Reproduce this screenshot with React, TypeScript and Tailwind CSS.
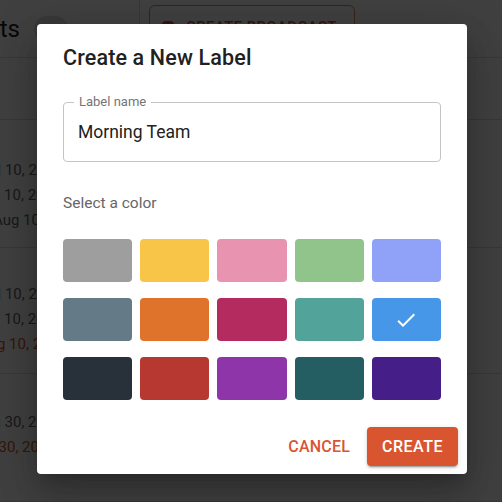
import React, { useState } from 'react';

const colors = [
  '#9e9e9e', '#f8c548', '#e893b0', '#91c48b', '#8fa2f7',
  '#647b87', '#e0732c', '#b42b60', '#52a49a', '#4797e9',
  '#283139', '#b73830', '#8e35aa', '#245d62', '#461e87',
];

type DateLine = { text: string; offset: string; red?: boolean };

const rows: { height: string; pad: string; lines: DateLine[] }[] = [
  { height: 'h-[62px]', pad: 'pt-0', lines: [] },
  {
    height: 'h-[128px]',
    pad: 'pt-[40px]',
    lines: [
      { text: 'Jul 10, 2023', offset: '-ml-[19px]' },
      { text: 'Aug 10, 2023', offset: '-ml-[26px]' },
      { text: 'Aug 10, 2023', offset: '-ml-[7px]' },
    ],
  },
  {
    height: 'h-[126px]',
    pad: 'pt-[36px]',
    lines: [
      { text: 'Jul 10, 2023', offset: '-ml-[19px]' },
      { text: 'Aug 10, 2023', offset: '-ml-[26px]' },
      { text: 'Aug 10, 2023', offset: '-ml-[21px]', red: true },
    ],
  },
  {
    height: 'h-[128px]',
    pad: 'pt-[38px]',
    lines: [
      { text: 'Jun 30, 2023', offset: '-ml-[24px]' },
      { text: 'Jun 30, 2023', offset: '-ml-[30px]', red: true },
    ],
  },
];

const BackgroundPage: React.FC = () => (
  <div className="w-[502px] h-[502px] bg-white overflow-hidden">
    {/* Header */}
    <div className="flex items-center h-[58px] border-b border-[#e0e0e0]">
      <div className="w-[120px] -ml-[100px] text-right text-[24px] text-[#222]">Contacts</div>
      <div className="ml-[14px] w-[34px] h-[26px] rounded-full bg-[#e0e0e0] flex items-center justify-center text-[13px] text-[#333]">
        71
      </div>
      <div className="ml-[35px] w-0 h-0 border-l-[5px] border-r-[5px] border-t-[5px] border-l-transparent border-r-transparent border-t-[#666]" />
      <div className="ml-[26px] w-px self-stretch bg-[#e0e0e0]" />
      <div className="ml-[9px] self-start mt-[5px] h-[44px] w-[206px] border border-[#d9552f]/70 rounded-md flex items-center px-3 gap-3">
        <div className="w-[12px] h-[12px] bg-[#d9552f] rounded-sm" />
        <span className="text-[15px] font-medium text-[#d9552f] tracking-wide">CREATE BROADCAST</span>
      </div>
    </div>

    {/* List rows */}
    {rows.map((row, i) => (
      <div key={i} className={`${row.height} ${row.pad} border-b border-[#e0e0e0] flex flex-col gap-[4px]`}>
        {row.lines.map((line, j) => (
          <div
            key={j}
            className={`${line.offset} text-[15px] leading-[21px] whitespace-nowrap ${line.red ? 'text-[#d9552f]' : 'text-[#666]'}`}
          >
            {line.text}
          </div>
        ))}
      </div>
    ))}
  </div>
);

const App: React.FC = () => {
  const [name, setName] = useState('Morning Team');
  const [selected, setSelected] = useState(9);

  return (
    <div className="relative w-[502px] h-[502px] overflow-hidden" style={{ fontFamily: 'Roboto, "Noto Sans", sans-serif' }}>
      <BackgroundPage />

      {/* Backdrop + dialog */}
      <div className="absolute inset-0 bg-black/75 pl-[37px] pt-[24px]">
        <div className="w-[430px] h-[450px] bg-white rounded-[4px] shadow-[0_11px_15px_-7px_rgba(0,0,0,0.2),0_24px_38px_3px_rgba(0,0,0,0.14),0_9px_46px_8px_rgba(0,0,0,0.12)] px-[26px] pt-[18px] pb-[8px] flex flex-col">
          <h2 className="h-[32px] leading-[32px] text-[21.5px] font-medium text-[#212121] tracking-[0.15px]">
            Create a New Label
          </h2>

          {/* Outlined text field */}
          <div className="relative mt-[28px] h-[60px] border border-[#c4c4c4] rounded-[4px]">
            <span className="absolute -top-[9px] left-[10px] px-[5px] bg-white text-[13px] leading-[16px] text-[#757575]">
              Label name
            </span>
            <input
              value={name}
              onChange={(e) => setName(e.target.value)}
              className="w-full h-full px-[14px] text-[17.5px] text-[#212121] bg-transparent outline-none"
            />
          </div>

          <div className="mt-[31px] text-[15.5px] leading-[20px] text-[#666]">Select a color</div>

          {/* Color swatches */}
          <div className="mt-[26px] grid grid-cols-5 gap-x-[8px] gap-y-[16px]">
            {colors.map((c, i) => (
              <button
                key={c}
                type="button"
                onClick={() => setSelected(i)}
                className="h-[43px] rounded-[4px] flex items-center justify-center"
                style={{ backgroundColor: c }}
              >
                {selected === i && (
                  <svg width="24" height="24" viewBox="0 0 24 24" fill="#fff">
                    <path d="M9 16.17 4.83 12l-1.42 1.41L9 19 21 7l-1.41-1.41z" />
                  </svg>
                )}
              </button>
            ))}
          </div>

          {/* Actions */}
          <div className="mt-[27px] -mr-[17px] flex justify-end items-center gap-[9px]">
            <button type="button" className="h-[39px] px-[8px] text-[16px] font-medium tracking-[0.2px] text-[#d9552f] rounded-[4px]">
              CANCEL
            </button>
            <button
              type="button"
              className="h-[39px] w-[91px] text-[16px] font-medium tracking-[0.5px] text-white bg-[#d9552f] rounded-[4px] shadow-[0_3px_1px_-2px_rgba(0,0,0,0.2),0_2px_2px_0_rgba(0,0,0,0.14),0_1px_5px_0_rgba(0,0,0,0.12)]"
            >
              CREATE
            </button>
          </div>
        </div>
      </div>
    </div>
  );
};

export default App;
